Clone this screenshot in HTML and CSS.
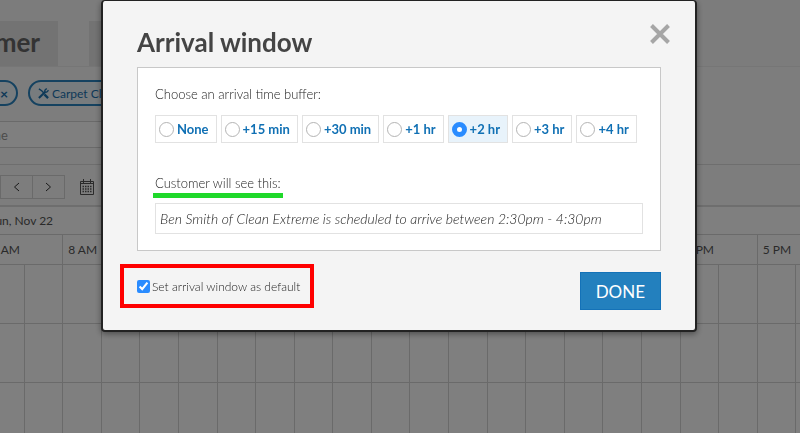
FILE: index.html
```html
<!DOCTYPE html>
<html lang="en">
<head>
    <meta charset="UTF-8">
    <meta name="viewport" content="width=device-width, initial-scale=1.0">
    <title>Arrival window</title>
    <link rel="stylesheet" href="styles.css">
</head>
<body>

    <!-- Scheduling page behind the dialog -->
    <div class="page">
        <nav class="tabs">
            <a href="#" class="tab">Customer</a>
            <a href="#" class="tab" aria-label="Job"></a>
        </nav>

        <section class="services">
            <div class="pills">
                <button type="button" class="pill"><b>×</b></button>
                <button type="button" class="pill">
                    <svg width="11" height="11" viewBox="0 0 12 12" fill="none" stroke="currentColor">
                        <path d="M1 1l3 2 3 3" stroke-width="1.5"/>
                        <path d="M7 7l4 4" stroke-width="2.5"/>
                        <path d="M1 11l7-7" stroke-width="2.2"/>
                        <path d="M9.500 .5L7.500 2.500v2h2l2-2" stroke-width="1.5"/>
                    </svg>
                    Carpet Cleaning
                </button>
            </div>
            <input type="text" class="service-input" placeholder="Name" aria-label="Name">
        </section>

        <div class="toolbar">
            <div class="pager">
                <button type="button" aria-label="Previous">
                    <svg width="7" height="10" viewBox="0 0 7 10"><path d="M6 1L1.500 5 6 9"/></svg>
                </button>
                <button type="button" aria-label="Next">
                    <svg width="7" height="10" viewBox="0 0 7 10"><path d="M1 1l4.500 4L1 9"/></svg>
                </button>
            </div>
            <button type="button" class="calendar" aria-label="Pick a date">
                <svg width="14" height="16" viewBox="0 0 14 16">
                    <path d="M.5 2.500h13v13H.5zM.5 4.500h13M3.500 0v4M10.500 0v4" fill="none" stroke="currentColor"/>
                    <path d="M2.500 7.500h9M2.500 10h9M2.500 12.500h9" stroke="currentColor" stroke-width="1.500" stroke-dasharray="1.500 1"/>
                </svg>
            </button>
        </div>

        <div class="schedule">
            <div class="day">Sun, Nov 22</div>
            <div class="hours">
                <span>7 AM</span><span>8 AM</span><span></span><span></span><span></span><span></span><span></span><span></span><span></span><span>4 PM</span><span>5 PM</span>
            </div>
            <div class="slots">
                <i></i><i></i><i></i><i></i><i></i><i></i><i></i><i></i><i></i><i></i><i></i><i></i><i></i><i></i><i></i><i></i><i></i><i></i><i></i><i></i><i></i><i></i>
            </div>
            <div class="slots">
                <i></i><i></i><i></i><i></i><i></i><i></i><i></i><i></i><i></i><i></i><i></i><i></i><i></i><i></i><i></i><i></i><i></i><i></i><i></i><i></i><i></i><i></i>
            </div>
            <div class="slots">
                <i></i><i></i><i></i><i></i><i></i><i></i><i></i><i></i><i></i><i></i><i></i><i></i><i></i><i></i><i></i><i></i><i></i><i></i><i></i><i></i><i></i><i></i>
            </div>
        </div>
    </div>

    <!-- Dimmed layer with the dialog -->
    <div class="overlay">
        <form class="modal" role="dialog" aria-labelledby="modal-title">
            <header class="modal-header">
                <h1 id="modal-title">Arrival window</h1>
                <button type="button" class="close" aria-label="Close">
                    <svg width="20" height="20" viewBox="0 0 20 20"><path d="M1.500 1.500l17 17M18.500 1.500l-17 17"/></svg>
                </button>
            </header>

            <div class="panel">
                <p id="buffer-label">Choose an arrival time buffer:</p>
                <div class="options" role="radiogroup" aria-labelledby="buffer-label">
                    <label class="option"><input type="radio" name="buffer">None</label>
                    <label class="option"><input type="radio" name="buffer">+15 min</label>
                    <label class="option"><input type="radio" name="buffer">+30 min</label>
                    <label class="option"><input type="radio" name="buffer">+1 hr</label>
                    <label class="option selected"><input type="radio" name="buffer" checked>+2 hr</label>
                    <label class="option"><input type="radio" name="buffer">+3 hr</label>
                    <label class="option"><input type="radio" name="buffer">+4 hr</label>
                </div>
                <label for="message" class="message-label">Customer will see this:</label>
                <input type="text" id="message" class="message" readonly value="Ben Smith of Clean Extreme is scheduled to arrive between 2:30pm - 4:30pm">
            </div>

            <footer class="modal-footer">
                <label class="default">
                    <input type="checkbox" checked>Set arrival window as default
                </label>
                <button type="button" class="done">DONE</button>
            </footer>
        </form>
    </div>

</body>
</html>
```
FILE: styles.css
```css
/* Basic reset */
* {
    margin: 0;
    padding: 0;
    box-sizing: border-box;
}

body {
    font-family: Lato, sans-serif;
    font-size: 12px;
    color: #444;
    background: #fff;
    min-height: 100vh;
    overflow: hidden;
}

button,
input {
    font: inherit;
    color: inherit;
}

button {
    background: none;
    border: none;
    cursor: pointer;
}

.page {
    height: 100vh;
    overflow: hidden;
    background: #fbfbfb;
    color: #555;
}

/* Tabs */
.tabs {
    display: flex;
    gap: 31px;
    padding-top: 21px;
    margin-left: -90px;
    background: #f8f8f8;
    border-bottom: 1px solid #ececec;
}

.tab {
    width: 148px;
    height: 45px;
    padding-right: 18px;
    background: #e6e6e6;
    color: #666;
    font-size: 26px;
    font-weight: 700;
    line-height: 42px;
    text-align: right;
    text-decoration: none;
}

/* Services */
.services {
    padding: 13px 0 16px;
    border-bottom: 1px solid #dcdcdc;
}

.pills {
    display: flex;
    gap: 10px;
    margin-left: -70px;
}

.pill {
    display: flex;
    align-items: center;
    justify-content: flex-end;
    gap: 3px;
    height: 26px;
    min-width: 88px;
    padding: 0 8px;
    border: 2px solid #2a84c0;
    border-radius: 13px;
    background: #f0f8fd;
    color: #1a72b0;
}

.pill b {
    font-size: 14px;
}

.service-input {
    display: block;
    width: 60%;
    height: 27px;
    margin: 15px 0 0 -30px;
    padding-left: 3px;
    border: 1px solid #d4d4d4;
    background: #fff;
    font-size: 13px;
}

.service-input::placeholder {
    color: #999;
}

/* Toolbar */
.toolbar {
    display: flex;
    align-items: center;
    gap: 15px;
    height: 40px;
    padding-top: 4px;
}

.pager {
    display: flex;
    border: 1px solid #d4d4d4;
}

.pager button {
    width: 31px;
    height: 22px;
}

.pager button + button {
    width: 32px;
    border-left: 1px solid #d4d4d4;
}

.pager path {
    fill: none;
    stroke: #333;
}

.calendar {
    line-height: 0;
}

/* Schedule grid */
.schedule {
    margin: 0 -34px 0 -15px;
    background: #fff;
}

.day {
    height: 30px;
    padding-left: 4px;
    border-top: 2px solid #dcdcdc;
    border-bottom: 1px solid #d4d4d4;
    line-height: 28px;
}

.hours {
    display: grid;
    grid-template-columns: repeat(11, 1fr);
}

.hours span {
    height: 29px;
    padding-left: 5px;
    border-left: 1px solid #d4d4d4;
    line-height: 30px;
}

.slots {
    display: grid;
    grid-template-columns: repeat(22, 1fr);
    border-top: 1px solid #d4d4d4;
}

.slots i {
    height: 58px;
    border-left: 1px solid #d4d4d4;
}

/* Dimmed layer */
.overlay {
    position: fixed;
    inset: 0;
    display: flex;
    justify-content: center;
    align-items: flex-start;
    background: rgba(0, 0, 0, 0.5);
}

.modal {
    width: 100%;
    max-width: 596px;
    margin-right: 2px;
    padding: 0 34px 20px;
    border: 2px solid #222;
    border-top-width: 1px;
    border-radius: 4px;
    background: #f4f4f4;
    box-shadow: 0 2px 6px rgba(0, 0, 0, 0.4);
}

.modal-header {
    display: flex;
    justify-content: space-between;
    align-items: center;
    height: 66px;
    padding-top: 16px;
}

h1 {
    font-size: 26px;
    font-weight: 700;
}

.close {
    line-height: 0;
    margin: -16px -9px 0 0;
}

.close path {
    stroke: #a6a6a6;
    stroke-width: 4;
}

.panel {
    padding: 16px 17px;
    border: 1px solid #c8c8c8;
    background: #fff;
    color: #222;
    font-size: 13px;
    font-weight: 300;
    line-height: 20px;
}

.options {
    display: flex;
    gap: 4px;
    margin: 11px 0 30px;
}

.option {
    display: flex;
    align-items: center;
    gap: 3px;
    height: 28px;
    padding: 0 7px 0 3px;
    border: 1px solid #e2e2e2;
    color: #1070b4;
    font-weight: 700;
    white-space: nowrap;
}

.option.selected {
    background: #e8f3fb;
}

.option input {
    appearance: none;
    width: 15px;
    height: 15px;
    border: 1px solid #b4b4b4;
    border-radius: 50%;
    background: #fff;
}

.option input:checked {
    border: 5px solid #2a8cff;
}

/* Green underline below the label */
.message-label {
    position: relative;
    display: inline-block;
}

.message-label::after {
    content: "";
    position: absolute;
    left: -2px;
    right: -2px;
    bottom: -5px;
    height: 5px;
    background: #1fd82a;
}

.message {
    display: block;
    width: 100%;
    height: 31px;
    margin-top: 10px;
    padding: 0 4px;
    border: 1px solid #e2e2e2;
    font-size: 14px;
    font-style: italic;
}

.modal-footer {
    display: flex;
    justify-content: space-between;
    align-items: flex-start;
    padding-top: 21px;
}

.default {
    position: relative;
    display: flex;
    align-items: center;
    gap: 2px;
    height: 28px;
    color: #222;
    font-weight: 300;
}

/* Red frame around the checkbox row */
.default::after {
    content: "";
    position: absolute;
    inset: -8px -14px -8px -17px;
    border: 4px solid #f00;
}

.default input {
    width: 13px;
    height: 13px;
    accent-color: #2a8cff;
}

.done {
    height: 38px;
    padding: 0 15px;
    border: 1px solid #1472b8;
    background: #2380be;
    color: #fff;
    font-size: 17px;
}
```
